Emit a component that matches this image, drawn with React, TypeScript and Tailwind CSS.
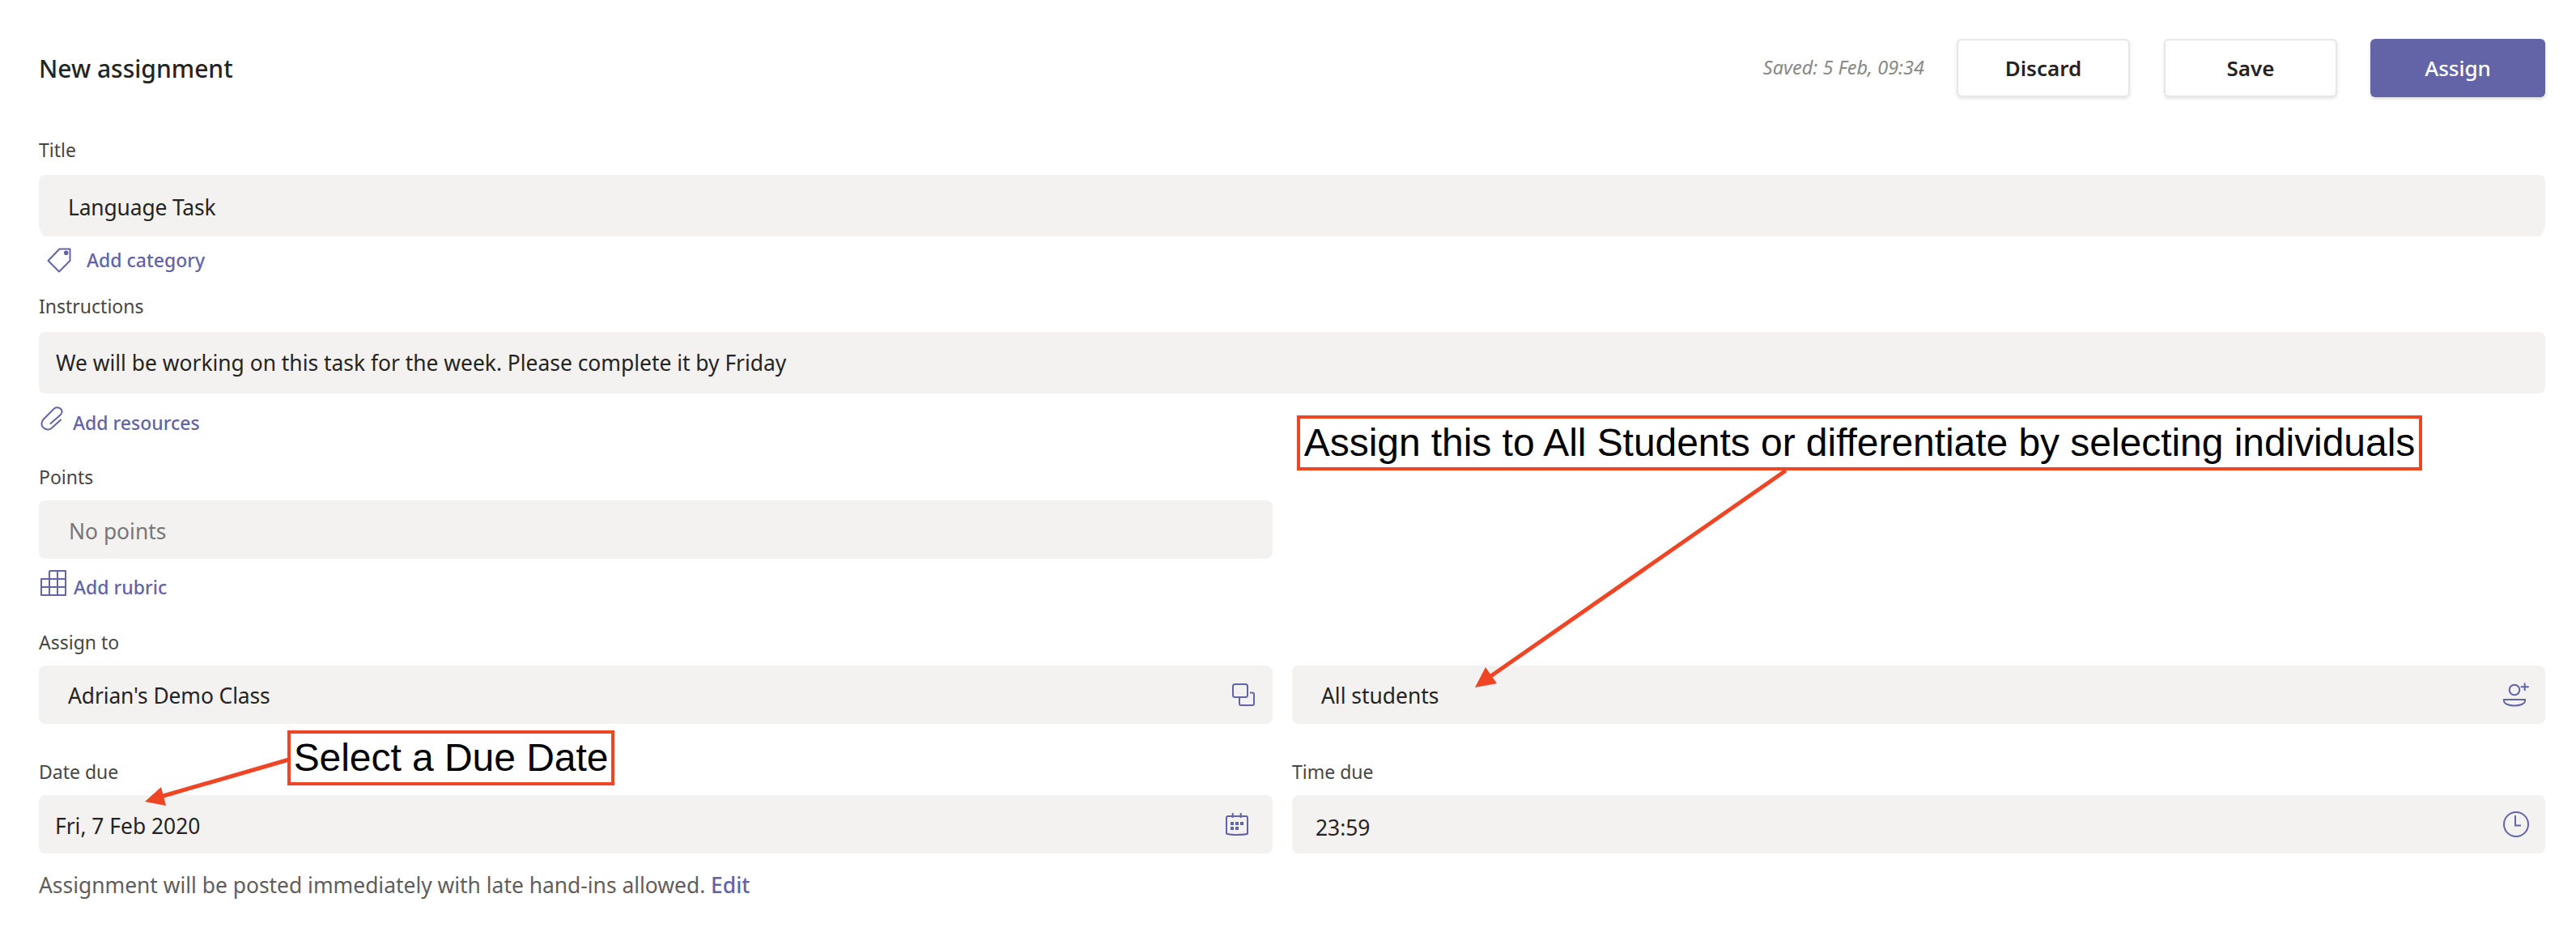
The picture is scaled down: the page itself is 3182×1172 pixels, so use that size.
import React from 'react';

const font = "font-['Noto_Sans',sans-serif]";

const TagIcon = () => (
  <svg width="30" height="31" viewBox="0 0 30 31" fill="none" stroke="#6264a7" strokeWidth="2" strokeLinejoin="round">
    <path d="M28.5 1.5H15.5L1.5 16L15 29.5L28.5 16Z" />
    <circle cx="23.7" cy="6.2" r="1.8" fill="#6264a7" />
  </svg>
);

const ClipIcon = () => (
  <svg width="28" height="30" viewBox="0 0 28 30" fill="none" stroke="#6264a7" strokeWidth="2" strokeLinecap="round">
    <path d="M25 16.5L13.5 27C9 30.5 1 27 1.5 20.5C1.7 18.5 2.5 17 4 15.5L17 2.5C21-.5 27 2.5 26.5 7C26.3 8.5 25.5 9.5 24.5 10.5L12.5 21" />
  </svg>
);

const GridIcon = () => (
  <svg width="32" height="32" viewBox="0 0 32 32" fill="none" stroke="#6264a7" strokeWidth="2" strokeLinejoin="round">
    <path d="M11 1H31V31H1V11H31M11 1V31M21 1V31M1 21H31" />
  </svg>
);

const CopyIcon = () => (
  <svg width="28" height="28" viewBox="0 0 28 28" fill="none" stroke="#6264a7" strokeWidth="2">
    <rect x="1" y="1" width="18" height="16" rx="2.5" />
    <path d="M22 11.5H25a2 2 0 0 1 2 2V25a2 2 0 0 1-2 2H11a2 2 0 0 1-2-2V18" />
  </svg>
);

const CalendarIcon = () => (
  <svg width="28" height="28" viewBox="0 0 28 28" fill="none" stroke="#6264a7" strokeWidth="2">
    <path d="M3 4H25a2 2 0 0 1 2 2V25.5C22 27.5 6 27.5 1 25.5V6a2 2 0 0 1 2-2Z" />
    <path d="M8.7 0V6M18.7 0V6" />
    <g fill="#6264a7" stroke="none">
      <rect x="6" y="11" width="4" height="4" />
      <rect x="12" y="11" width="4" height="4" />
      <rect x="18" y="11" width="4" height="4" />
      <rect x="6" y="17" width="4" height="4" />
      <rect x="12" y="17" width="4" height="4" />
    </g>
  </svg>
);

const PersonIcon = () => (
  <svg width="32" height="30" viewBox="0 0 32 30" fill="none" stroke="#6264a7" strokeWidth="2">
    <circle cx="14" cy="9" r="6.3" />
    <path d="M21.7 5.3H31.7M26.7 0.5V10" />
    <path d="M1 21H27V22.5C27 26.5 20 28.5 14 28.5C8 28.5 1 26.5 1 22.5Z" />
  </svg>
);

const ClockIcon = () => (
  <svg width="32" height="32" viewBox="0 0 32 32" fill="none" stroke="#6264a7" strokeWidth="2">
    <circle cx="16" cy="16" r="15" />
    <path d="M15 5V17.5H22" />
  </svg>
);

const Label = ({ children, className }: { children: React.ReactNode; className: string }) => (
  <div className={`h-[34px] text-[23px] leading-[34px] text-[#484644] ${className}`}>{children}</div>
);

const Field = ({
  children,
  icon,
  className,
  textClass,
}: {
  children: React.ReactNode;
  icon?: React.ReactNode;
  className: string;
  textClass: string;
}) => (
  <div className={`flex items-center justify-between rounded-[8px] bg-[#f3f2f1] ${className}`}>
    <span className={`text-[26.4px] ${textClass}`}>{children}</span>
    {icon}
  </div>
);

const AddLink = ({
  icon,
  text,
  className,
  textClass,
}: {
  icon: React.ReactNode;
  text: string;
  className: string;
  textClass: string;
}) => (
  <div className={`flex items-center text-[23px] text-[#6264a7] ${className}`}>
    {icon}
    <span className={`font-medium ${textClass}`}>{text}</span>
  </div>
);

const Callout = ({ text, className }: { text: string; className: string }) => (
  <div
    className={`absolute flex items-center justify-center border-[4px] border-[#f04525] bg-white font-['Liberation_Sans',sans-serif] text-[48px] leading-none tracking-[-0.05px] whitespace-nowrap text-black ${className}`}
  >
    {text}
  </div>
);

export default function App() {
  return (
    <div className={`relative h-[1172px] w-[3182px] overflow-hidden bg-white pt-[48px] pr-[38px] pl-[48px] ${font}`}>
      <header className="flex h-[72px] items-center">
        <h1 className="text-[30px] font-medium text-[#252423]">New assignment</h1>
        <span className="ml-auto text-[23.5px] text-[#8a8886] italic">Saved: 5 Feb, 09:34</span>
        <button className="ml-[40px] h-[72px] w-[214px] rounded-[6px] border-2 border-[#e6e6ec] bg-white text-[26px] font-semibold text-[#252423] shadow-[0_2px_4px_rgba(0,0,0,0.1)]">
          Discard
        </button>
        <button className="ml-[42px] h-[72px] w-[214px] rounded-[6px] border-2 border-[#e6e6ec] bg-white text-[26px] font-semibold text-[#252423] shadow-[0_2px_4px_rgba(0,0,0,0.1)]">
          Save
        </button>
        <button className="ml-[41px] h-[72px] w-[216px] rounded-[6px] bg-[#6264a7] text-[26px] font-medium text-white shadow-[0_2px_4px_rgba(0,0,0,0.15)]">
          Assign
        </button>
      </header>

      <Label className="mt-[48px]">Title</Label>
      <Field className="mt-[14px] h-[72px] pl-[36px] shadow-[0_8px_0_-4px_#f3f2f1]" textClass="pt-[10px] tracking-[-0.15px] text-[#252423]">
        Language Task
      </Field>
      <AddLink className="mt-[18px] h-[30px] pl-[10px]" icon={<span className="mr-[19px] flex"><TagIcon /></span>} text="Add category" textClass="" />

      <Label className="mt-[25px]">Instructions</Label>
      <Field className="mt-[15px] h-[76px] pl-[21px]" textClass="pt-[2px] text-[#252423]">
        We will be working on this task for the week. Please complete it by Friday
      </Field>
      <AddLink className="mt-[16px] h-[29px] pl-[2px]" icon={<span className="mr-[12px] flex"><ClipIcon /></span>} text="Add resources" textClass="pt-[12px]" />

      <Label className="mt-[41px]">Points</Label>
      <div className="grid grid-cols-[1524px_1548px] gap-x-[24px]">
        <Field className="mt-[12px] h-[72px]" textClass="pt-[6px] pl-[37px] text-[#797775]">No points</Field>
      </div>
      <AddLink className="mt-[14px] h-[32px] pl-[2px]" icon={<span className="mr-[9px] flex"><GridIcon /></span>} text="Add rubric" textClass="pt-[10px]" />

      <div className="mt-[40px] grid grid-cols-[1524px_1548px] gap-x-[24px]">
        <div>
          <Label className="">Assign to</Label>
          <Field className="mt-[12px] h-[72px] pr-[22px] pl-[36px]" icon={<CopyIcon />} textClass="pt-[4px] tracking-[-0.1px] text-[#252423]">
            Adrian's Demo Class
          </Field>
        </div>
        <div>
          <div className="h-[34px]" />
          <Field className="mt-[12px] h-[72px] pr-[20px] pl-[36px]" icon={<PersonIcon />} textClass="pt-[4px] text-[#252423]">
            All students
          </Field>
        </div>
        <div className="mt-[42px]">
          <Label className="">Date due</Label>
          <Field className="mt-[12px] h-[72px] pr-[30px] pl-[20px]" icon={<CalendarIcon />} textClass="pt-[6px] text-[#252423]">
            Fri, 7 Feb 2020
          </Field>
        </div>
        <div className="mt-[42px]">
          <Label className="">Time due</Label>
          <Field className="mt-[12px] h-[72px] pr-[20px] pl-[29px]" icon={<ClockIcon />} textClass="pt-[10px] text-[#252423]">
            23:59
          </Field>
        </div>
      </div>

      <p className="mt-[22px] h-[34px] text-[26.4px] leading-[34px] text-[#605e5c]">
        Assignment will be posted immediately with late hand-ins allowed.{' '}
        <span className="font-medium text-[#6264a7]">Edit</span>
      </p>

      {/* annotations drawn over the screenshot */}
      <svg className="pointer-events-none absolute top-0 left-0" width="3182" height="1172" viewBox="0 0 3182 1172">
        <line x1="357" y1="938" x2="198" y2="984" stroke="#f04525" strokeWidth="5" />
        <polygon points="179,990 199,972 205,995" fill="#f04525" />
        <line x1="2206" y1="581" x2="1840" y2="836" stroke="#f04525" strokeWidth="5" />
        <polygon points="1822,849 1835,824 1849,844" fill="#f04525" />
      </svg>
      <Callout text="Assign this to All Students or differentiate by selecting individuals" className="top-[513px] left-[1602px] h-[68px] w-[1390px]" />
      <Callout text="Select a Due Date" className="top-[902px] left-[355px] h-[68px] w-[404px]" />
    </div>
  );
}
